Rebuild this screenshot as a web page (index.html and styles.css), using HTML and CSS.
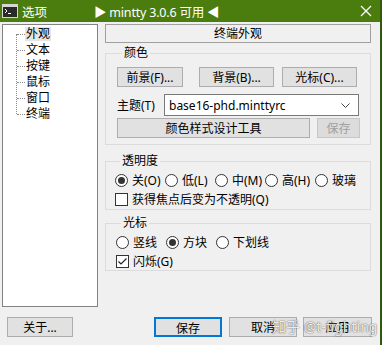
FILE: index.html
```html
<!DOCTYPE html>
<html lang="zh-CN">
<head>
<meta charset="UTF-8">
<title>选项</title>
<link rel="stylesheet" href="styles.css">
</head>
<body>

<div class="window">
    <div class="titlebar">
        <svg class="app-icon" width="16" height="14" viewBox="0 0 16 14">
            <rect x="0" y="0" width="16" height="14" fill="#d6d6d6"/>
            <rect x="1" y="3" width="14" height="10" fill="#2a2a2a"/>
            <polyline points="3,5 5,7 3,9" fill="none" stroke="#fff" stroke-width="1"/>
            <line x1="6" y1="9.5" x2="9" y2="9.5" stroke="#fff" stroke-width="1"/>
        </svg>
        <span class="title">选项</span>
        <span class="update">▶ mintty 3.0.6 可用 ◀</span>
        <svg class="close" width="12" height="12" viewBox="0 0 12 12">
            <line x1="1" y1="1" x2="11" y2="11" stroke="#fff" stroke-width="1.2"/>
            <line x1="11" y1="1" x2="1" y2="11" stroke="#fff" stroke-width="1.2"/>
        </svg>
    </div>

    <div class="main">
        <div class="tree">
            <ul class="tree-list">
                <li class="selected"><span>外观</span></li>
                <li><span>文本</span></li>
                <li><span>按键</span></li>
                <li><span>鼠标</span></li>
                <li><span>窗口</span></li>
                <li><span>终端</span></li>
            </ul>
        </div>

        <div class="panel">
            <div class="panel-title">终端外观</div>

            <fieldset class="group colours">
                <legend>颜色</legend>
                <div class="row">
                    <button class="btn fg">前景(F)...</button>
                    <button class="btn bg">背景(B)...</button>
                    <button class="btn cur">光标(C)...</button>
                </div>
                <div class="row theme">
                    <label class="theme-label">主题(T)</label>
                    <div class="select">
                        <span>base16-phd.minttyrc</span>
                        <svg width="9" height="5" viewBox="0 0 9 5">
                            <polyline points="0.5,0.5 4.5,4.5 8.5,0.5" fill="none" stroke="#444" stroke-width="1"/>
                        </svg>
                    </div>
                </div>
                <div class="row tools">
                    <button class="btn designer">颜色样式设计工具</button>
                    <button class="btn save" disabled>保存</button>
                </div>
            </fieldset>

            <fieldset class="group transparency">
                <legend>透明度</legend>
                <div class="row options">
                    <span class="option"><i class="radio checked"></i>关(O)</span>
                    <span class="option"><i class="radio"></i>低(L)</span>
                    <span class="option"><i class="radio"></i>中(M)</span>
                    <span class="option"><i class="radio"></i>高(H)</span>
                    <span class="option"><i class="radio"></i>玻璃</span>
                </div>
                <div class="row options">
                    <span class="option"><i class="check"></i>获得焦点后变为不透明(Q)</span>
                </div>
            </fieldset>

            <fieldset class="group cursor">
                <legend>光标</legend>
                <div class="row options">
                    <span class="option"><i class="radio"></i>竖线</span>
                    <span class="option"><i class="radio checked"></i>方块</span>
                    <span class="option"><i class="radio"></i>下划线</span>
                </div>
                <div class="row options">
                    <span class="option"><i class="check checked">
                        <svg width="11" height="11" viewBox="0 0 11 11">
                            <polyline points="1.5,5.5 4,8 9.5,2.5" fill="none" stroke="#222" stroke-width="1.2"/>
                        </svg>
                    </i>闪烁(G)</span>
                </div>
            </fieldset>
        </div>
    </div>

    <div class="footer">
        <button class="btn about">关于...</button>
        <div class="actions">
            <button class="btn default">保存</button>
            <button class="btn">取消</button>
            <button class="btn apply">应用</button>
        </div>
    </div>

    <div class="watermark">知乎 @t-fighting</div>
</div>

</body>
</html>
```

FILE: styles.css
```css
* {
    box-sizing: border-box;
}

body {
    margin: 0;
    background-color: #fff;
    font-family: "Noto Sans", "Noto Sans CJK SC", sans-serif;
    font-size: 12px;
    color: #000;
}

.window {
    position: relative;
    width: 382px;
    height: 345px;
    background-color: #f0f0f0;
    border-right: 2px solid #2f5a0c;
    overflow: hidden;
}

/* title bar */
.titlebar {
    display: flex;
    align-items: center;
    height: 22px;
    padding-left: 2px;
    background-color: #4b7d0e;
    color: #fff;
    font-size: 12.5px;
}

.app-icon {
    margin-right: 4px;
}

.title {
    width: 72px;
}

.update {
    letter-spacing: -0.2px;
}

.close {
    margin-left: auto;
    margin-right: 8px;
}

/* main area */
.main {
    display: flex;
    align-items: flex-start;
    height: 285px;
    padding: 2px 0 0 2px;
}

.tree {
    width: 96px;
    height: 283px;
    background-color: #fff;
    border: 1px solid #828282;
}

.tree-list {
    position: relative;
    list-style: none;
    margin: 0;
    padding: 1px 0 0 0;
}

.tree-list::before {
    content: '';
    position: absolute;
    left: 13px;
    top: 9px;
    bottom: 8px;
    border-left: 1px dotted #8a8a8a;
}

.tree-list li {
    position: relative;
    height: 16px;
    line-height: 16px;
    padding-left: 22px;
}

.tree-list li::before {
    content: '';
    position: absolute;
    left: 14px;
    top: 8px;
    width: 8px;
    border-top: 1px dotted #8a8a8a;
}

.tree-list span {
    display: inline-block;
    height: 14px;
    line-height: 14px;
    padding: 0 1px;
}

.tree-list .selected span {
    background-color: #e5e5e5;
}

.panel {
    width: 266px;
    margin-left: 7px;
}

.panel-title {
    height: 19px;
    line-height: 17px;
    text-align: center;
    border: 1px solid #a0a0a0;
}

/* group boxes */
.group {
    margin: 0;
    padding: 0;
    border: 1px solid #dcdcdc;
    min-width: 0;
}

.group legend {
    margin-left: 5px;
    padding: 0 2px;
    height: 14px;
    line-height: 14px;
}

.row {
    display: flex;
    align-items: center;
}

.colours {
    margin-top: 3px;
    padding: 7px 0 6px 11px;
}

.transparency {
    margin-top: 9px;
    padding: 4px 0 2px 9px;
}

.cursor {
    margin-top: 6px;
    padding: 4px 0 1px 10px;
}

/* buttons */
.btn {
    height: 20px;
    padding: 0;
    font-family: inherit;
    font-size: 12px;
    color: #000;
    background-color: #e1e1e1;
    border: 1px solid #adadad;
}

.colours .row:first-child .btn {
    height: 21px;
}

.fg {
    width: 66px;
}

.bg {
    width: 75px;
    margin-left: 16px;
}

.cur {
    width: 75px;
    margin-left: 8px;
}

.theme {
    margin-top: 7px;
}

.theme-label {
    width: 47px;
}

.select {
    display: flex;
    align-items: center;
    justify-content: space-between;
    width: 195px;
    height: 22px;
    padding: 0 8px 0 4px;
    background-color: #fff;
    border: 1px solid #7a7a7a;
}

.tools {
    margin-top: 2px;
}

.designer {
    width: 193px;
}

.save {
    width: 43px;
    margin-left: 7px;
    color: #a0a0a0;
    background-color: #dcdcdc;
    border-color: #c6c6c6;
}

/* radios and checkboxes */
.options {
    height: 16px;
}

.options + .options {
    margin-top: 3px;
}

.option {
    display: flex;
    align-items: center;
    width: 50px;
    white-space: nowrap;
}

.radio,
.check {
    display: inline-block;
    flex: none;
    width: 13px;
    height: 13px;
    margin-right: 4px;
    background-color: #fff;
    border: 1px solid #333;
}

.radio {
    position: relative;
    border-radius: 50%;
}

.radio.checked::after {
    content: '';
    position: absolute;
    left: 2px;
    top: 2px;
    width: 7px;
    height: 7px;
    border-radius: 50%;
    background-color: #333;
}

.check svg {
    display: block;
}

/* footer */
.footer {
    display: flex;
    padding: 10px 8px 0 7px;
}

.about {
    width: 66px;
}

.actions {
    display: flex;
    margin-left: auto;
}

.actions .btn {
    width: 68px;
    margin-left: 7px;
}

.actions .apply {
    width: 69px;
    margin-left: 6px;
}

.btn.default {
    border: 2px solid #0078d7;
}

.watermark {
    position: absolute;
    left: 272px;
    top: 316px;
    font-size: 14px;
    color: rgba(255, 255, 255, 0.9);
    text-shadow: 0 0 1px rgba(0, 0, 0, 0.6), 0 0 2px rgba(0, 0, 0, 0.3);
}
```
